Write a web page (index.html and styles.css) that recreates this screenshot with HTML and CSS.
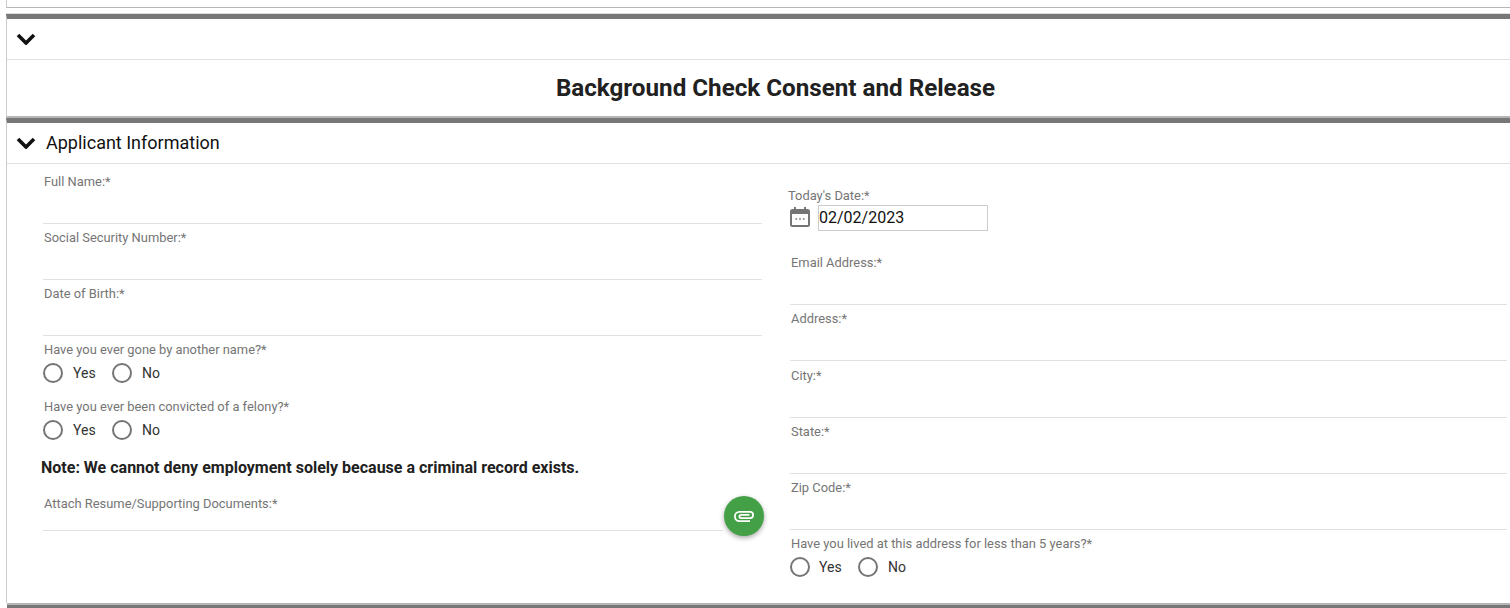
FILE: index.html
```html
<!DOCTYPE html>
<html lang="en">
<head>
<meta charset="utf-8">
<title>Background Check Consent and Release</title>
<link rel="stylesheet" href="styles.css">
</head>
<body>
<div class="page">
  <div class="top-card"></div>
  <section class="section section-first">
    <div class="section-head">
      <svg class="chevron" viewBox="0 0 20 12"><path d="M2 2l8 8 8-8"/></svg>
    </div>
    <h1 class="title">Background Check Consent and Release</h1>
  </section>
  <section class="section">
    <div class="section-head">
      <svg class="chevron" viewBox="0 0 20 12"><path d="M2 2l8 8 8-8"/></svg>
      <span class="section-name">Applicant Information</span>
    </div>
    <div class="columns">
      <div class="col-left">
        <div class="field"><label class="label">Full Name:*</label></div>
        <div class="field"><label class="label">Social Security Number:*</label></div>
        <div class="field"><label class="label">Date of Birth:*</label></div>
        <div class="radio-field">
          <label class="label">Have you ever gone by another name?*</label>
          <div class="radios">
            <span class="radio"></span><span class="radio-text">Yes</span>
            <span class="radio"></span><span class="radio-text">No</span>
          </div>
        </div>
        <div class="radio-field">
          <label class="label">Have you ever been convicted of a felony?*</label>
          <div class="radios">
            <span class="radio"></span><span class="radio-text">Yes</span>
            <span class="radio"></span><span class="radio-text">No</span>
          </div>
        </div>
        <p class="note">Note: We cannot deny employment solely because a criminal record exists.</p>
        <div class="field field-attach">
          <label class="label">Attach Resume/Supporting Documents:*</label>
          <button class="fab" type="button" aria-label="Attach">
            <svg viewBox="0 0 24 24" width="24" height="24"><path d="M2 12.5a5.5 5.5 0 0 1 5.5-5.5H18a4 4 0 0 1 0 8H9a2.5 2.5 0 0 1 0-5h8.5v1.8H9a.7.7 0 0 0 0 1.4h9a2.2 2.2 0 0 0 0-4.4H7.5a3.7 3.7 0 0 0 0 7.4h10.5V18H7.500A5.500 5.500 0 0 1 2 12.500z"/></svg>
          </button>
        </div>
      </div>
      <div class="col-right">
        <div class="date-field">
          <label class="label date-label">Today's Date:*</label>
          <div class="date-row">
            <svg class="calendar" viewBox="0 0 20 20" width="20" height="20">
              <path d="M4 0h2v2h8V0h2v2h1.500A2.500 2.500 0 0 1 20 4.500v13a2.500 2.500 0 0 1-2.500 2.500h-15A2.500 2.500 0 0 1 0 17.500v-13A2.500 2.500 0 0 1 2.500 2H4zM2 7v10.500a.5.500 0 0 0 .5.5h15a.5.500 0 0 0 .5-.5V7z"/>
              <path d="M5.400 11.200h1.600v1.600H5.400zM9.200 11.200h1.600v1.600H9.200zM13 11.200h1.600v1.600H13z"/>
            </svg>
            <input class="date-input" type="text" value="02/02/2023">
          </div>
        </div>
        <div class="field"><label class="label">Email Address:*</label></div>
        <div class="field"><label class="label">Address:*</label></div>
        <div class="field field-tall"><label class="label">City:*</label></div>
        <div class="field"><label class="label">State:*</label></div>
        <div class="field"><label class="label">Zip Code:*</label></div>
        <div class="radio-field">
          <label class="label">Have you lived at this address for less than 5 years?*</label>
          <div class="radios radios-tight">
            <span class="radio"></span><span class="radio-text">Yes</span>
            <span class="radio"></span><span class="radio-text">No</span>
          </div>
        </div>
      </div>
    </div>
  </section>
  <div class="bottom-bar"></div>
</div>
</body>
</html>
```
FILE: styles.css
```css
* { box-sizing: border-box; }
html, body { margin: 0; height: 608px; overflow: hidden; background: #fff; }
body { font-family: Roboto, "Liberation Sans", sans-serif; color: #212121; }
.page { padding-left: 6px; }
.top-card { height: 8px; border-left: 1px solid #ccc; border-bottom: 1px solid #b5b5b5; margin-bottom: 6px; }
.section { border-left: 1px solid #ccc; border-top: 5px solid #777; }
.section-first { height: 104px; border-bottom: 2px solid #b5b5b5; box-shadow: 0 -1px 0 #ddd; }
.section-head { height: 41px; border-bottom: 1px solid #e0e0e0; display: flex; align-items: center; padding-left: 9px; }
.chevron { width: 20px; height: 12px; fill: none; stroke: #111; stroke-width: 3.6; }
.section-name { font-size: 18px; color: #111; margin: -2px 0 0 10px; }
.title { margin: 0; height: 56px; padding-left: 34px; font-size: 24.2px; font-weight: 700; line-height: 56px; text-align: center; color: #212121; }
.columns { display: grid; grid-template-columns: 719px 717px; column-gap: 28px; padding: 0 0 16px 36px; }
.col-left { padding-top: 4px; }
.label { display: block; font-size: 12.9px; line-height: 14px; color: #757575; padding-left: 1px; }
.field { height: 56px; padding-top: 7px; border-bottom: 1px solid #e0e0e0; }
.field-tall { height: 57px; padding-top: 8px; }
.radio-field { padding-top: 7px; height: 57px; }
.radios { display: flex; align-items: center; height: 20px; margin-top: 6px; font-size: 14px; color: #333; }
.radio { width: 20px; height: 20px; border: 2px solid #757575; border-radius: 50%; }
.radio-text { margin: 0 16px 0 10px; width: 23px; }
.radios-tight .radio:first-child { margin-right: -1px; }
.note { margin: 0 0 0 -2px; height: 38px; padding-top: 8px; font-size: 16px; line-height: 19px; font-weight: 700; color: #212121; }
.field-attach { position: relative; height: 41px; padding-top: 7px; margin-top: 2px; margin-right: 39px; }
.fab { position: absolute; top: 6px; right: -41px; width: 40px; height: 40px; padding: 0; border: 0; border-radius: 50%; background: #43a047; box-shadow: 0 2px 5px rgba(0,0,0,.35); display: flex; align-items: center; justify-content: center; }
.fab svg { fill: #fff; }
.date-field { height: 85px; padding-top: 25px; }
.date-label { margin-left: -3px; }
.date-row { display: flex; align-items: center; margin-top: 2px; }
.calendar { fill: #757575; flex: none; margin-top: -2px; }
.date-input { width: 170px; height: 26px; margin-left: 8px; padding: 0 0 2px; border: 1px solid #ccc; font: 16px Roboto, sans-serif; color: #111; background: #fff; }
.bottom-bar { margin-left: 1px; height: 5px; border-top: 2px solid #b5b5b5; background: #777; }
```
